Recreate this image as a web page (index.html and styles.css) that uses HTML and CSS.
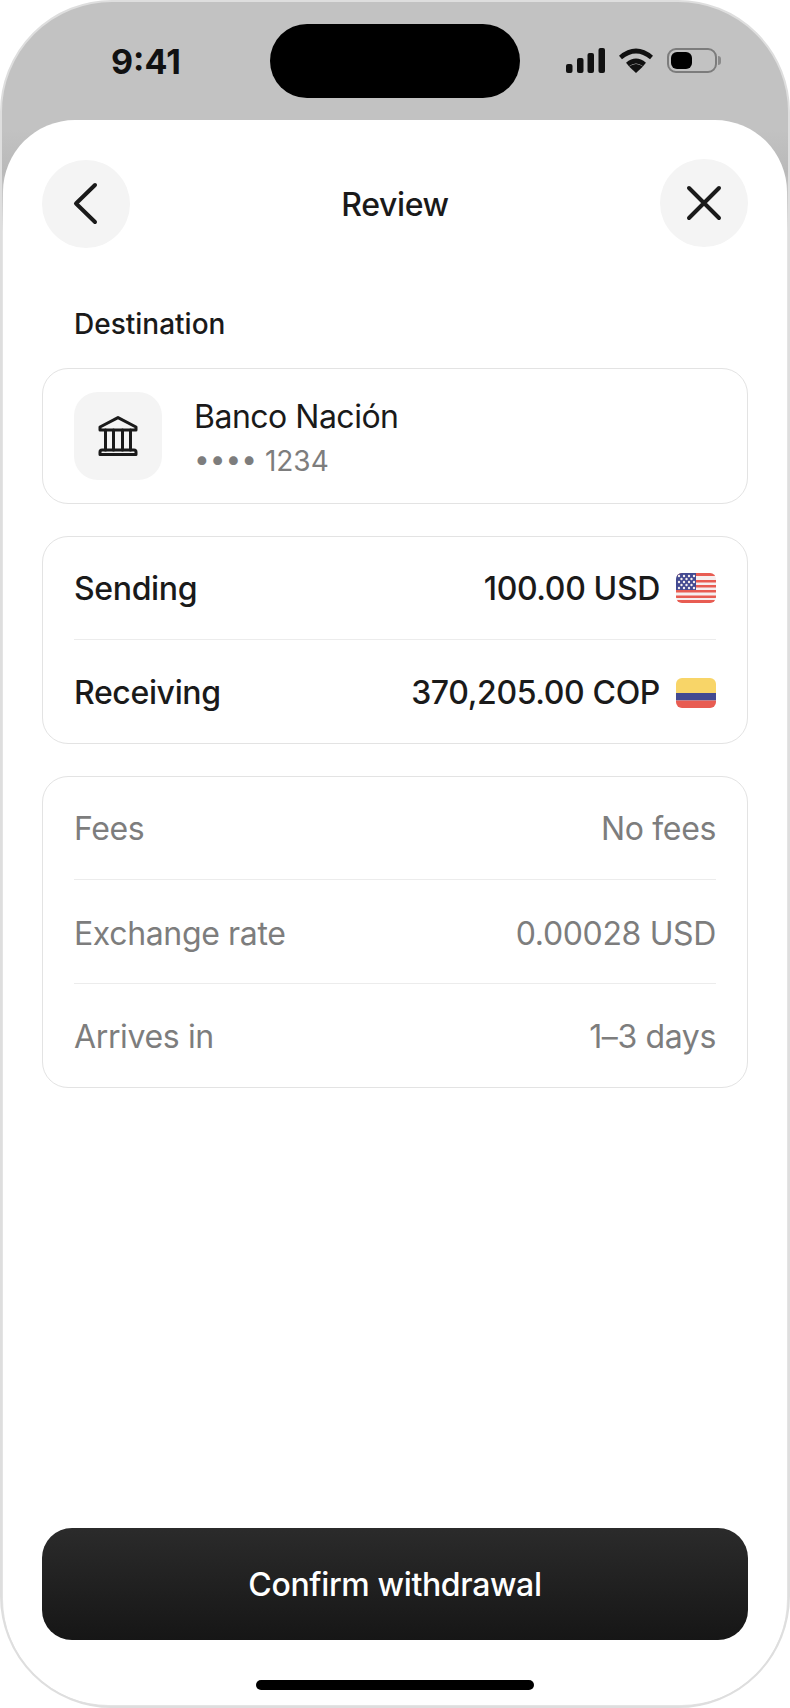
FILE: index.html
```html
<!DOCTYPE html>
<html lang="en">
<head>
    <meta charset="UTF-8">
    <meta name="viewport" content="width=device-width, initial-scale=1.0">
    <title>Review</title>
    <link rel="stylesheet" href="styles.css">
</head>
<body>
    <div class="phone">
        <div class="status-bar">
            <div class="clock">9:41</div>
            <div class="island"></div>
            <div class="status-icons">
                <svg width="39" height="25" viewBox="0 0 39 25" fill="#111">
                    <rect x="0" y="16" width="6.5" height="9" rx="2"/>
                    <rect x="11" y="10" width="6.5" height="15" rx="2"/>
                    <rect x="21.5" y="5" width="6.5" height="20" rx="2"/>
                    <rect x="32.5" y="0" width="6.5" height="25" rx="2"/>
                </svg>
                <svg width="34" height="25" viewBox="0 0 34 25" fill="none" stroke="#111" stroke-width="4.6">
                    <path d="M1.5 9.5 Q17 -3.5 32.5 9.5"/>
                    <path d="M8.5 16.5 Q17 9.5 25.5 16.5"/>
                    <path d="M10 18.5 Q17 13.5 24 18.5 L17 25 Z" fill="#111" stroke="none"/>
                </svg>
                <div class="battery"><div class="battery-level"></div></div>
            </div>
        </div>

        <div class="screen">
            <div class="topbar">
                <button class="round-btn">
                    <svg width="40" height="44" viewBox="0 0 40 44" fill="none" stroke="#1a1a1a" stroke-width="4" stroke-linecap="round" stroke-linejoin="round">
                        <path d="M29 3 L10 21.5 L29 40"/>
                    </svg>
                </button>
                <h1>Review</h1>
                <button class="round-btn close-btn">
                    <svg width="40" height="40" viewBox="0 0 40 40" fill="none" stroke="#1a1a1a" stroke-width="4" stroke-linecap="round">
                        <path d="M5 5 L35 35 M35 5 L5 35"/>
                    </svg>
                </button>
            </div>

            <div class="section-label">Destination</div>

            <div class="card bank-card">
                <div class="bank-icon">
                    <svg width="40" height="40" viewBox="0 0 40 40" fill="none" stroke="#1a1a1a" stroke-width="3" stroke-linecap="round" stroke-linejoin="round">
                        <path d="M2 11 L20 1.6 L38 11 V14 H2 Z"/>
                        <path d="M7.5 14 V34 M15.5 14 V34 M24.5 14 V34 M32.5 14 V34"/>
                        <path d="M4 34 H36 Q38 34 38 36 V38.4 H2 V36 Q2 34 4 34 Z"/>
                    </svg>
                </div>
                <div class="bank-text">
                    <div class="bank-name">Banco Nación</div>
                    <div class="bank-number"><span class="dots">••••</span> 1234</div>
                </div>
            </div>

            <div class="card amounts">
                <div class="row">
                    <span class="row-label">Sending</span>
                    <span class="row-value">
                        100.00 USD
                        <svg class="flag" width="40" height="30" viewBox="0 0 40 30">
                            <rect width="40" height="30" fill="#f6efef"/>
                            <g fill="#e85c52">
                                <rect y="0" width="40" height="3"/>
                                <rect y="7" width="40" height="2.5"/>
                                <rect y="12" width="40" height="2.5"/>
                                <rect y="17" width="40" height="2.5"/>
                                <rect y="22.5" width="40" height="2.5"/>
                                <rect y="27" width="40" height="3"/>
                            </g>
                            <rect width="20" height="17" fill="#434a91"/>
                            <g fill="#f6efef">
                                <circle cx="3" cy="3" r="1.2"/><circle cx="8" cy="3" r="1.2"/><circle cx="13" cy="3" r="1.2"/><circle cx="18" cy="3" r="1.2"/>
                                <circle cx="5.5" cy="6" r="1.2"/><circle cx="10.5" cy="6" r="1.2"/><circle cx="15.5" cy="6" r="1.2"/>
                                <circle cx="3" cy="9" r="1.2"/><circle cx="8" cy="9" r="1.2"/><circle cx="13" cy="9" r="1.2"/><circle cx="18" cy="9" r="1.2"/>
                                <circle cx="5.5" cy="12" r="1.2"/><circle cx="10.5" cy="12" r="1.2"/><circle cx="15.5" cy="12" r="1.2"/>
                                <circle cx="3" cy="15" r="1.2"/><circle cx="8" cy="15" r="1.2"/><circle cx="13" cy="15" r="1.2"/><circle cx="18" cy="15" r="1.2"/>
                            </g>
                        </svg>
                    </span>
                </div>
                <div class="row">
                    <span class="row-label">Receiving</span>
                    <span class="row-value">
                        370,205.00 COP
                        <svg class="flag" width="40" height="30" viewBox="0 0 40 30">
                            <rect width="40" height="15" fill="#f8d568"/>
                            <rect y="15" width="40" height="7.5" fill="#434a91"/>
                            <rect y="22.5" width="40" height="7.5" fill="#e85c52"/>
                        </svg>
                    </span>
                </div>
            </div>

            <div class="card muted">
                <div class="row"><span>Fees</span><span>No fees</span></div>
                <div class="row"><span>Exchange rate</span><span>0.00028 USD</span></div>
                <div class="row"><span>Arrives in</span><span>1–3 days</span></div>
            </div>

            <button class="confirm">Confirm withdrawal</button>
            <div class="home-bar"></div>
        </div>
    </div>
</body>
</html>
```

FILE: styles.css
```css
* {
    box-sizing: border-box;
}
body {
    margin: 0;
    background: #fff;
    font-family: 'Inter', 'Liberation Sans', sans-serif;
    color: #1a1a1a;
}
.phone {
    width: 790px;
    height: 1708px;
    display: flex;
    flex-direction: column;
    padding: 0 1px 1px;
    border: 2px solid #dedede;
    border-radius: 112px;
    overflow: hidden;
    background: linear-gradient(#c2c2c2 0, #c2c2c2 128px, #b9b9b9 170px, #e4e4e4 230px);
}

/* status bar */
.status-bar {
    height: 118px;
    flex-shrink: 0;
    display: grid;
    grid-template-columns: 1fr 250px 1fr;
    padding-top: 22px;
    align-items: start;
}
.clock {
    font-size: 34px;
    font-weight: 700;
    line-height: 34px;
    margin-top: 21px;
    padding-left: 108px;
    color: #111;
}
.island {
    height: 74px;
    background: #000;
    border-radius: 37px;
}
.status-icons {
    display: flex;
    align-items: center;
    gap: 14px;
    padding-left: 46px;
    margin-top: 24px;
}
.battery {
    position: relative;
    width: 50px;
    height: 25px;
    padding: 2px;
    border: 2px solid #7c7c7c;
    border-radius: 9px;
}
.battery::after {
    content: "";
    position: absolute;
    right: -6px;
    top: 6px;
    width: 3px;
    height: 9px;
    background: #8a8a8a;
    border-radius: 0 3px 3px 0;
}
.battery-level {
    width: 21px;
    height: 100%;
    background: #000;
    border-radius: 6px;
}

/* white sheet */
.screen {
    flex: 1;
    display: flex;
    flex-direction: column;
    padding: 40px 39px 15px;
    background: #fff;
    border-radius: 72px 72px 106px 106px;
}
.topbar {
    display: flex;
    justify-content: space-between;
    align-items: center;
}
h1 {
    margin: 0;
    font-size: 32px;
    font-weight: 500;
    letter-spacing: -0.36px;
    color: #1a1a1a;
}
.round-btn {
    width: 88px;
    height: 88px;
    display: flex;
    align-items: center;
    justify-content: center;
    padding: 0;
    border: none;
    border-radius: 50%;
    background: #f4f4f4;
}
.close-btn {
    margin-top: -2px;
}
.section-label {
    margin: 56px 0 24px 32px;
    font-size: 28px;
    line-height: 40px;
    font-weight: 500;
}
.card {
    margin-bottom: 32px;
    padding: 0 31px;
    border: 1px solid #e3e3e3;
    border-radius: 26px;
}
.bank-card {
    display: flex;
    align-items: center;
    gap: 32px;
    height: 136px;
}
.bank-icon {
    width: 88px;
    height: 88px;
    display: flex;
    align-items: center;
    justify-content: center;
    background: #f4f4f4;
    border-radius: 24px;
}
.bank-text {
    padding-top: 3px;
}
.bank-name {
    font-size: 32px;
    line-height: 44px;
    letter-spacing: -0.5px;
}
.bank-number {
    margin-top: 3px;
    font-size: 28px;
    line-height: 38px;
    color: #7d7d7d;
}
.row {
    height: 103px;
    display: flex;
    justify-content: space-between;
    align-items: center;
    font-size: 32px;
    letter-spacing: -0.36px;
    border-bottom: 1px solid #ececec;
}
.row:last-child {
    border-bottom: none;
}
.amounts .row:last-child {
    padding-top: 2px;
}
.row-label, .row-value {
    font-weight: 500;
}
.row-value {
    display: flex;
    align-items: center;
    gap: 16px;
}
.flag {
    border-radius: 6px;
}
.muted {
    color: #7d7d7d;
}
.muted .row {
    height: 103.4px;
    padding-top: 1px;
}
.muted .row:nth-child(n+2) {
    padding-top: 3px;
}
.confirm {
    height: 112px;
    margin-top: auto;
    border: none;
    border-radius: 30px;
    background: linear-gradient(#2b2b2b, #161616);
    color: #fff;
    font-family: inherit;
    font-size: 32px;
    font-weight: 500;
    letter-spacing: -0.36px;
}
.home-bar {
    width: 278px;
    height: 10px;
    margin: 40px auto 0;
    background: #000;
    border-radius: 5px;
}
```
